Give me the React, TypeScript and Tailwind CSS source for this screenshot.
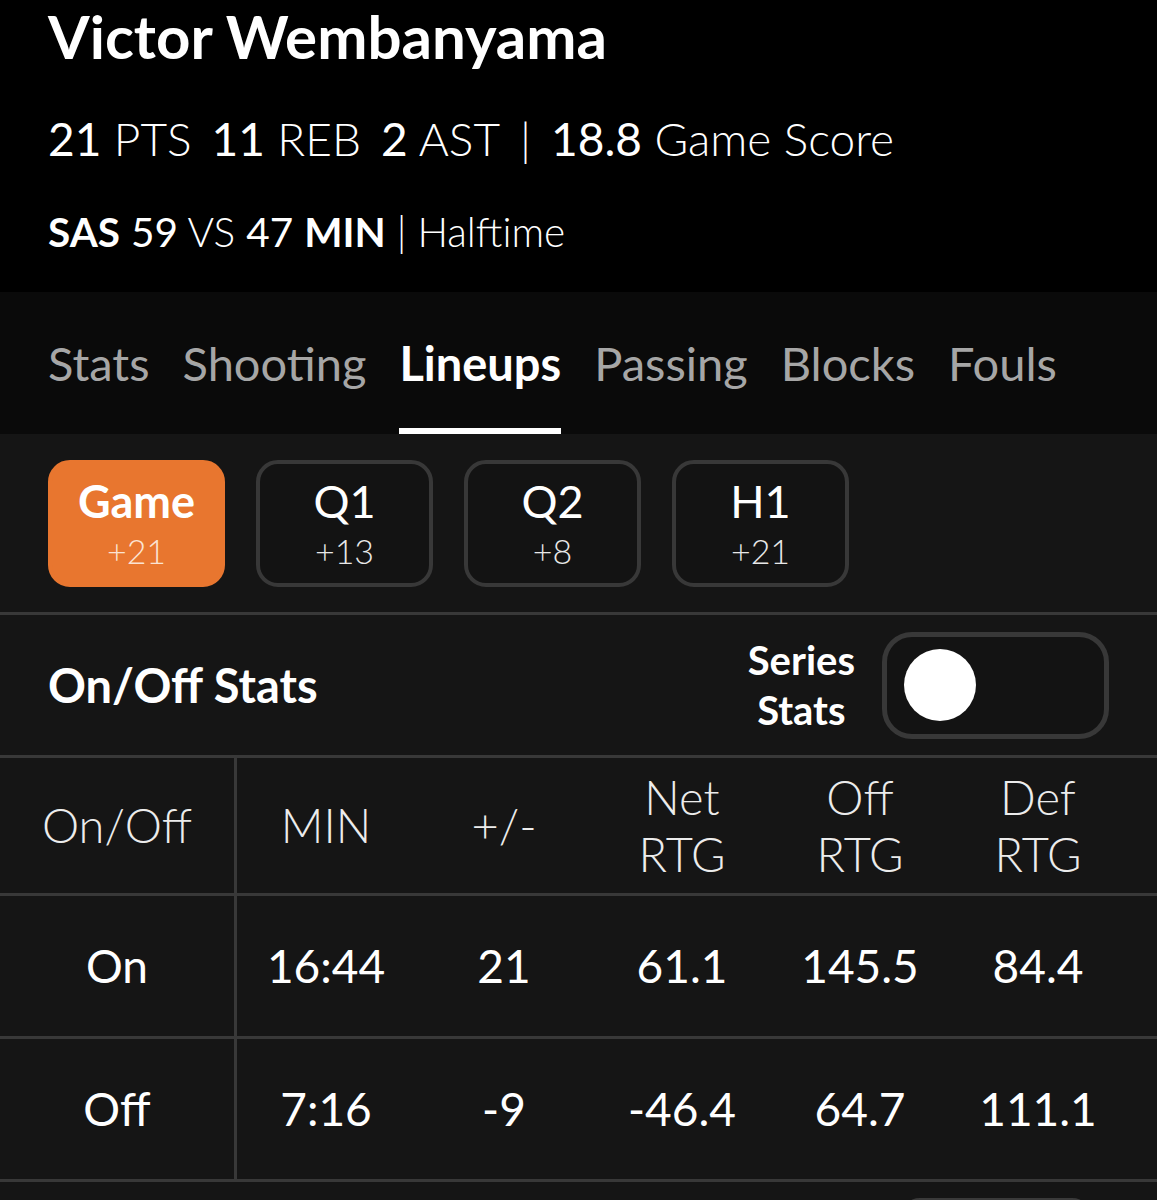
const tabs = ["Stats", "Shooting", "Lineups", "Passing", "Blocks", "Fouls"];

const periods = [
  { label: "Game", diff: "+21", active: true },
  { label: "Q1", diff: "+13" },
  { label: "Q2", diff: "+8" },
  { label: "H1", diff: "+21" },
];

const columns = [["MIN"], ["+/-"], ["Net", "RTG"], ["Off", "RTG"], ["Def", "RTG"]];

const rows = [
  { label: "On", values: ["16:44", "21", "61.1", "145.5", "84.4"] },
  { label: "Off", values: ["7:16", "-9", "-46.4", "64.7", "111.1"] },
];

export default function App() {
  return (
    <div className="min-h-[1200px] bg-[#151515] font-['Lato','Noto_Sans',sans-serif] text-white">
      {/* player header */}
      <div className="h-[292px] bg-black pl-12 pt-[1px]">
        <h1 className="text-[60px] font-bold leading-[70px]">Victor Wembanyama</h1>
        <div className="mt-[38px] flex items-center gap-[20px] text-[46px] leading-[60px] font-light">
          <span>
            <span className="font-normal">21</span> PTS
          </span>
          <span>
            <span className="font-normal">11</span> REB
          </span>
          <span>
            <span className="font-normal">2</span> AST
          </span>
          <span>|</span>
          <span>
            <span className="font-normal">18.8</span> Game Score
          </span>
        </div>
        <div className="mt-[38px] text-[40.5px] leading-[50px] font-light">
          <span className="font-bold">SAS</span> <span className="font-normal">59</span> VS{" "}
          <span className="font-normal">47</span> <span className="font-bold">MIN</span> | Halftime
        </div>
      </div>

      {/* tabs */}
      <div className="flex h-[142px] gap-[33px] bg-[#0a0a0a] pl-12">
        {tabs.map((t) => {
          const active = t === "Lineups";
          return (
            <div key={t} className="flex flex-col pt-[41px]">
              <span
                className={`text-[47px] leading-[60px] ${
                  active ? "font-bold text-white" : "text-[#a6a6a6]"
                }`}
              >
                {t}
              </span>
              <div className={`mt-auto h-[6px] ${active ? "bg-white" : ""}`} />
            </div>
          );
        })}
      </div>

      {/* period selector */}
      <div className="flex gap-[31px] px-12 pt-[26px] pb-[25px]">
        {periods.map((p) => (
          <div
            key={p.label}
            className={`flex h-[127px] w-[177px] flex-col items-center rounded-[22px] border-[4px] pt-[13px] ${
              p.active ? "border-[#e8762f] bg-[#e8762f]" : "border-[#383838] bg-[#131313]"
            }`}
          >
            <span className={`text-[45px] leading-[48px] ${p.active ? "font-bold" : ""}`}>
              {p.label}
            </span>
            <span
              className={`mt-[6px] text-[34px] leading-[40px] font-light ${
                p.active ? "text-[#fbe3d3]" : "text-[#e8e8e8]"
              }`}
            >
              {p.diff}
            </span>
          </div>
        ))}
      </div>

      {/* on/off header */}
      <div className="flex h-[143px] items-center justify-between border-t-[3px] border-[#383838] px-12">
        <span className="text-[47px] font-bold leading-[56px]">On/Off Stats</span>
        <div className="flex items-center gap-[27px]">
          <span className="text-center text-[40px] font-bold leading-[50px]">
            Series
            <br />
            Stats
          </span>
          <div className="flex h-[107px] w-[227px] items-center rounded-[30px] border-[5px] border-[#383838] bg-[#131313] pl-[17px]">
            <div className="h-[72px] w-[72px] rounded-full bg-white" />
          </div>
        </div>
      </div>

      {/* table */}
      <div className="border-t-[3px] border-[#383838]">
        <div className="grid h-[138px] grid-cols-[237px_repeat(5,178px)] border-b-[3px] border-[#383838] text-[47px] font-light text-[#ececec]">
          <div className="flex items-center justify-center border-r-[3px] border-[#383838] leading-[55px]">
            On/Off
          </div>
          {columns.map((c) => (
            <div key={c.join(" ")} className="flex flex-col items-center justify-center leading-[57px]">
              {c.map((line) => (
                <span key={line}>{line}</span>
              ))}
            </div>
          ))}
        </div>
        {rows.map((r) => (
          <div
            key={r.label}
            className="grid h-[143px] grid-cols-[237px_repeat(5,178px)] border-b-[3px] border-[#383838] text-[46px] leading-[54px]"
          >
            <div className="flex items-center justify-center border-r-[3px] border-[#383838]">
              {r.label}
            </div>
            {r.values.map((v, i) => (
              <div key={i} className="flex items-center justify-center">
                {v}
              </div>
            ))}
          </div>
        ))}
      </div>

      <div className="pt-[16px] pl-[900px]">
        <div className="h-[40px] w-[192px] rounded-[24px] border-[3px] border-[#3a3a3a]" />
      </div>
    </div>
  );
}
